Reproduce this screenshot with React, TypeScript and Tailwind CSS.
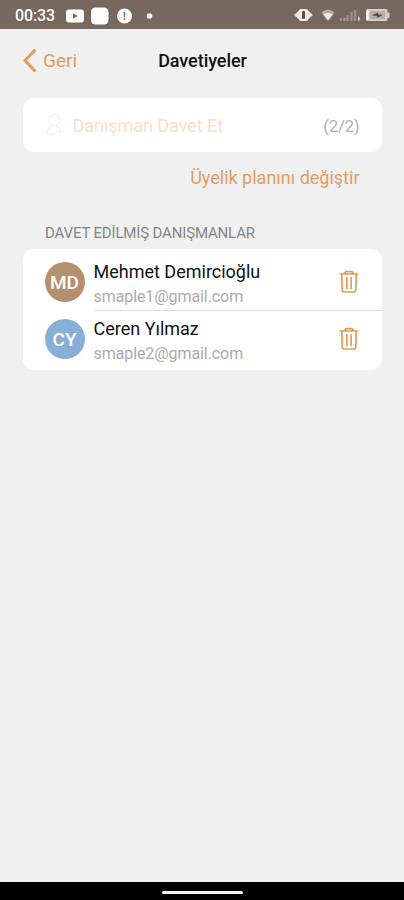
function StatusBar() {
  return (
    <header className="flex h-[29px] items-center bg-[#76675f] pl-[15px] pr-[13px] text-white">
      <span className="w-[40px] whitespace-nowrap pt-[2px] text-[16px] font-medium leading-none tracking-[-0.1px]">00:33</span>
      <svg className="ml-[11px] mt-[2px]" width="90" height="18" viewBox="0 0 90 18" fill="white">
        <rect x="0" y="2.5" width="18" height="13" rx="3" />
        <path d="M7 6.2v5.600L11.800 9z" fill="#76675f" />
        <rect x="25" y="0.5" width="17.5" height="17" rx="4.5" />
        <circle cx="58.5" cy="9" r="7.5" />
        <path d="M57.6 4.8h1.8l-.4 5.4h-1zM57.8 11.3h1.4v1.6h-1.4z" fill="#76675f" />
        <circle cx="83.500" cy="9" r="2.800" />
      </svg>
      <svg className="ml-auto mt-[1px]" width="97" height="18" viewBox="0 0 97 18">
        <path d="M0.500 9l4.500-4v8zM18.500 9L14 5v8z" fill="#e9e2de" stroke="#e9e2de" strokeLinejoin="round" />
        <rect x="4.500" y="3" width="10" height="12" rx="3" fill="#f1ece8" />
        <rect x="8" y="5" width="3" height="8" rx="1.200" fill="#5b4c45" />
        <path d="M27.500 6.200q6.500-4.800 13 0L34 15z" fill="#b5a9a2" />
        <path d="M29.300 8.500q4.700-2.800 9.400 0L34 14.500z" fill="#f5f0ec" />
        <path d="M46 13.500h1.800M49.200 13.500h2.400" stroke="#a2958d" strokeWidth="3" />
        <path d="M53.500 15V9M57.500 15V6M61 15V4" stroke="#9d9088" strokeWidth="2.200" />
        <path d="M64 10v5.500l2.500-2.700z" fill="#d8ceca" />
        <path d="M73.500 3h18.500q1.500 0 1.500 1.500v2h1q1 0 1 1v3.500q0 1-1 1h-1V13.500q0 1.500-1.500 1.500h-18.500q-1.500 0-1.500-1.500V4.500q0-1.500 1.500-1.500z" fill="#d7cdc9" />
        <path d="M73.500 4.500v9" stroke="white" strokeWidth="2" />
        <path d="M76 5h15v8H76z" fill="#b8aca6" />
        <path d="M78 9.500l6-3v2l5 .2-5.700 3.300v-2z" fill="#544741" />
      </svg>
    </header>
  );
}

function TrashIcon() {
  return (
    <svg width="20" height="24" viewBox="0 0 20 24" fill="none" stroke="#e29a59" strokeWidth="1.700" strokeLinecap="round" strokeLinejoin="round" aria-hidden="true">
      <path d="M1.200 4h17.600M5.500 3.700l1.300-2h6.400l1.300 2M2.800 4.500l.4 15.500q.1 2 2.300 2h9q2.200 0 2.300-2l.4-15.500M7.900 7.500v11M12.100 7.500v11" />
    </svg>
  );
}

interface Consultant {
  initials: string;
  name: string;
  email: string;
  avatar: string;
}

const consultants: Consultant[] = [
  { initials: "MD", name: "Mehmet Demircioğlu", email: "smaple1@gmail.com", avatar: "bg-[#b4906e]" },
  { initials: "CY", name: "Ceren Yılmaz", email: "smaple2@gmail.com", avatar: "bg-[#87afd8]" },
];

function ConsultantRow({ person, divided }: { person: Consultant; divided: boolean }) {
  return (
    <li className="flex h-[57px] pl-[22px]">
      <span className={`mt-[9px] flex size-10 shrink-0 items-center justify-center rounded-full pt-[2px] text-[19px] font-medium text-white ${person.avatar}`}>
        {person.initials}
      </span>
      <div className={`ml-[9px] flex flex-1 justify-between pr-[23px] ${divided ? "border-t border-[#dedede]" : "pt-px"}`}>
        <div className="whitespace-nowrap pt-[5px]">
          <p className="text-[18px] leading-[25px] text-[#111]">{person.name}</p>
          <p className="text-[16px] leading-[25px] tracking-[-0.08px] text-[#ababab]">{person.email}</p>
        </div>
        <button className="mt-[16px] h-6" aria-label="Sil"><TrashIcon /></button>
      </div>
    </li>
  );
}

export default function App() {
  return (
    <div className="flex h-[900px] w-[404px] flex-col overflow-hidden bg-[#f0f0f0] font-['Roboto',sans-serif]">
      <StatusBar />
      <nav className="grid h-[69px] grid-cols-[1fr_auto_1fr] items-center px-[22px] pb-[6px]">
        <button className="flex items-center text-[19px] text-[#e29a59]">
          <svg className="mr-[6px]" width="15" height="24" viewBox="0 0 15 24" fill="none" stroke="#e29a59" strokeWidth="3" strokeLinecap="round" strokeLinejoin="round" aria-hidden="true">
            <path d="M12.500 1.500L3 11.500l9.500 10" />
          </svg>
          <span className="pt-[2px]">Geri</span>
        </button>
        <h1 className="pl-px text-[18px] font-medium tracking-[-0.05px] text-[#111]">Davetiyeler</h1>
      </nav>
      <main className="flex flex-1 flex-col px-[22.500px]">
        <button className="flex h-[54px] items-center rounded-[11px] bg-white pl-[23px] pr-[22px] text-[18px]">
          <svg width="18" height="24" viewBox="0 0 18 24" fill="none" stroke="#f5f3f2" strokeWidth="1.500" strokeLinecap="round" aria-hidden="true">
            <rect x="3" y="1.500" width="10" height="11" rx="4.500" />
            <path d="M5.500 13Q1 14.500 1 21.500h8M10.500 13.200l2 1M14 15v7M10.500 18.500h7" />
          </svg>
          <span className="ml-[9px] pt-px tracking-[-0.050px] text-[#f7dfcb]">Danışman Davet Et</span>
          <span className="ml-auto pt-[3px] text-[17px] tracking-[-0.3px] text-[#b1b1b1]">(2/2)</span>
        </button>
        <button className="mr-[22px] mt-[11px] h-7 self-end whitespace-nowrap text-[18px] text-[#df9d65]">Üyelik planını değiştir</button>
        <h2 className="ml-[22.500px] mt-[32px] h-[20px] whitespace-nowrap text-[15px] leading-[20px] tracking-[-0.160px] text-[#858585]">DAVET EDİLMİŞ DANIŞMANLAR</h2>
        <ul className="mt-[6px] h-[121px] rounded-[11px] bg-white pt-[4px]">
          {consultants.map((person, i) => (
            <ConsultantRow key={person.email} person={person} divided={i > 0} />
          ))}
        </ul>
      </main>
      <footer className="flex h-[18px] items-center justify-center bg-black pt-[3px]">
        <span className="h-[3px] w-[81px] rounded-full bg-[#f2f2f2]" />
      </footer>
    </div>
  );
}
